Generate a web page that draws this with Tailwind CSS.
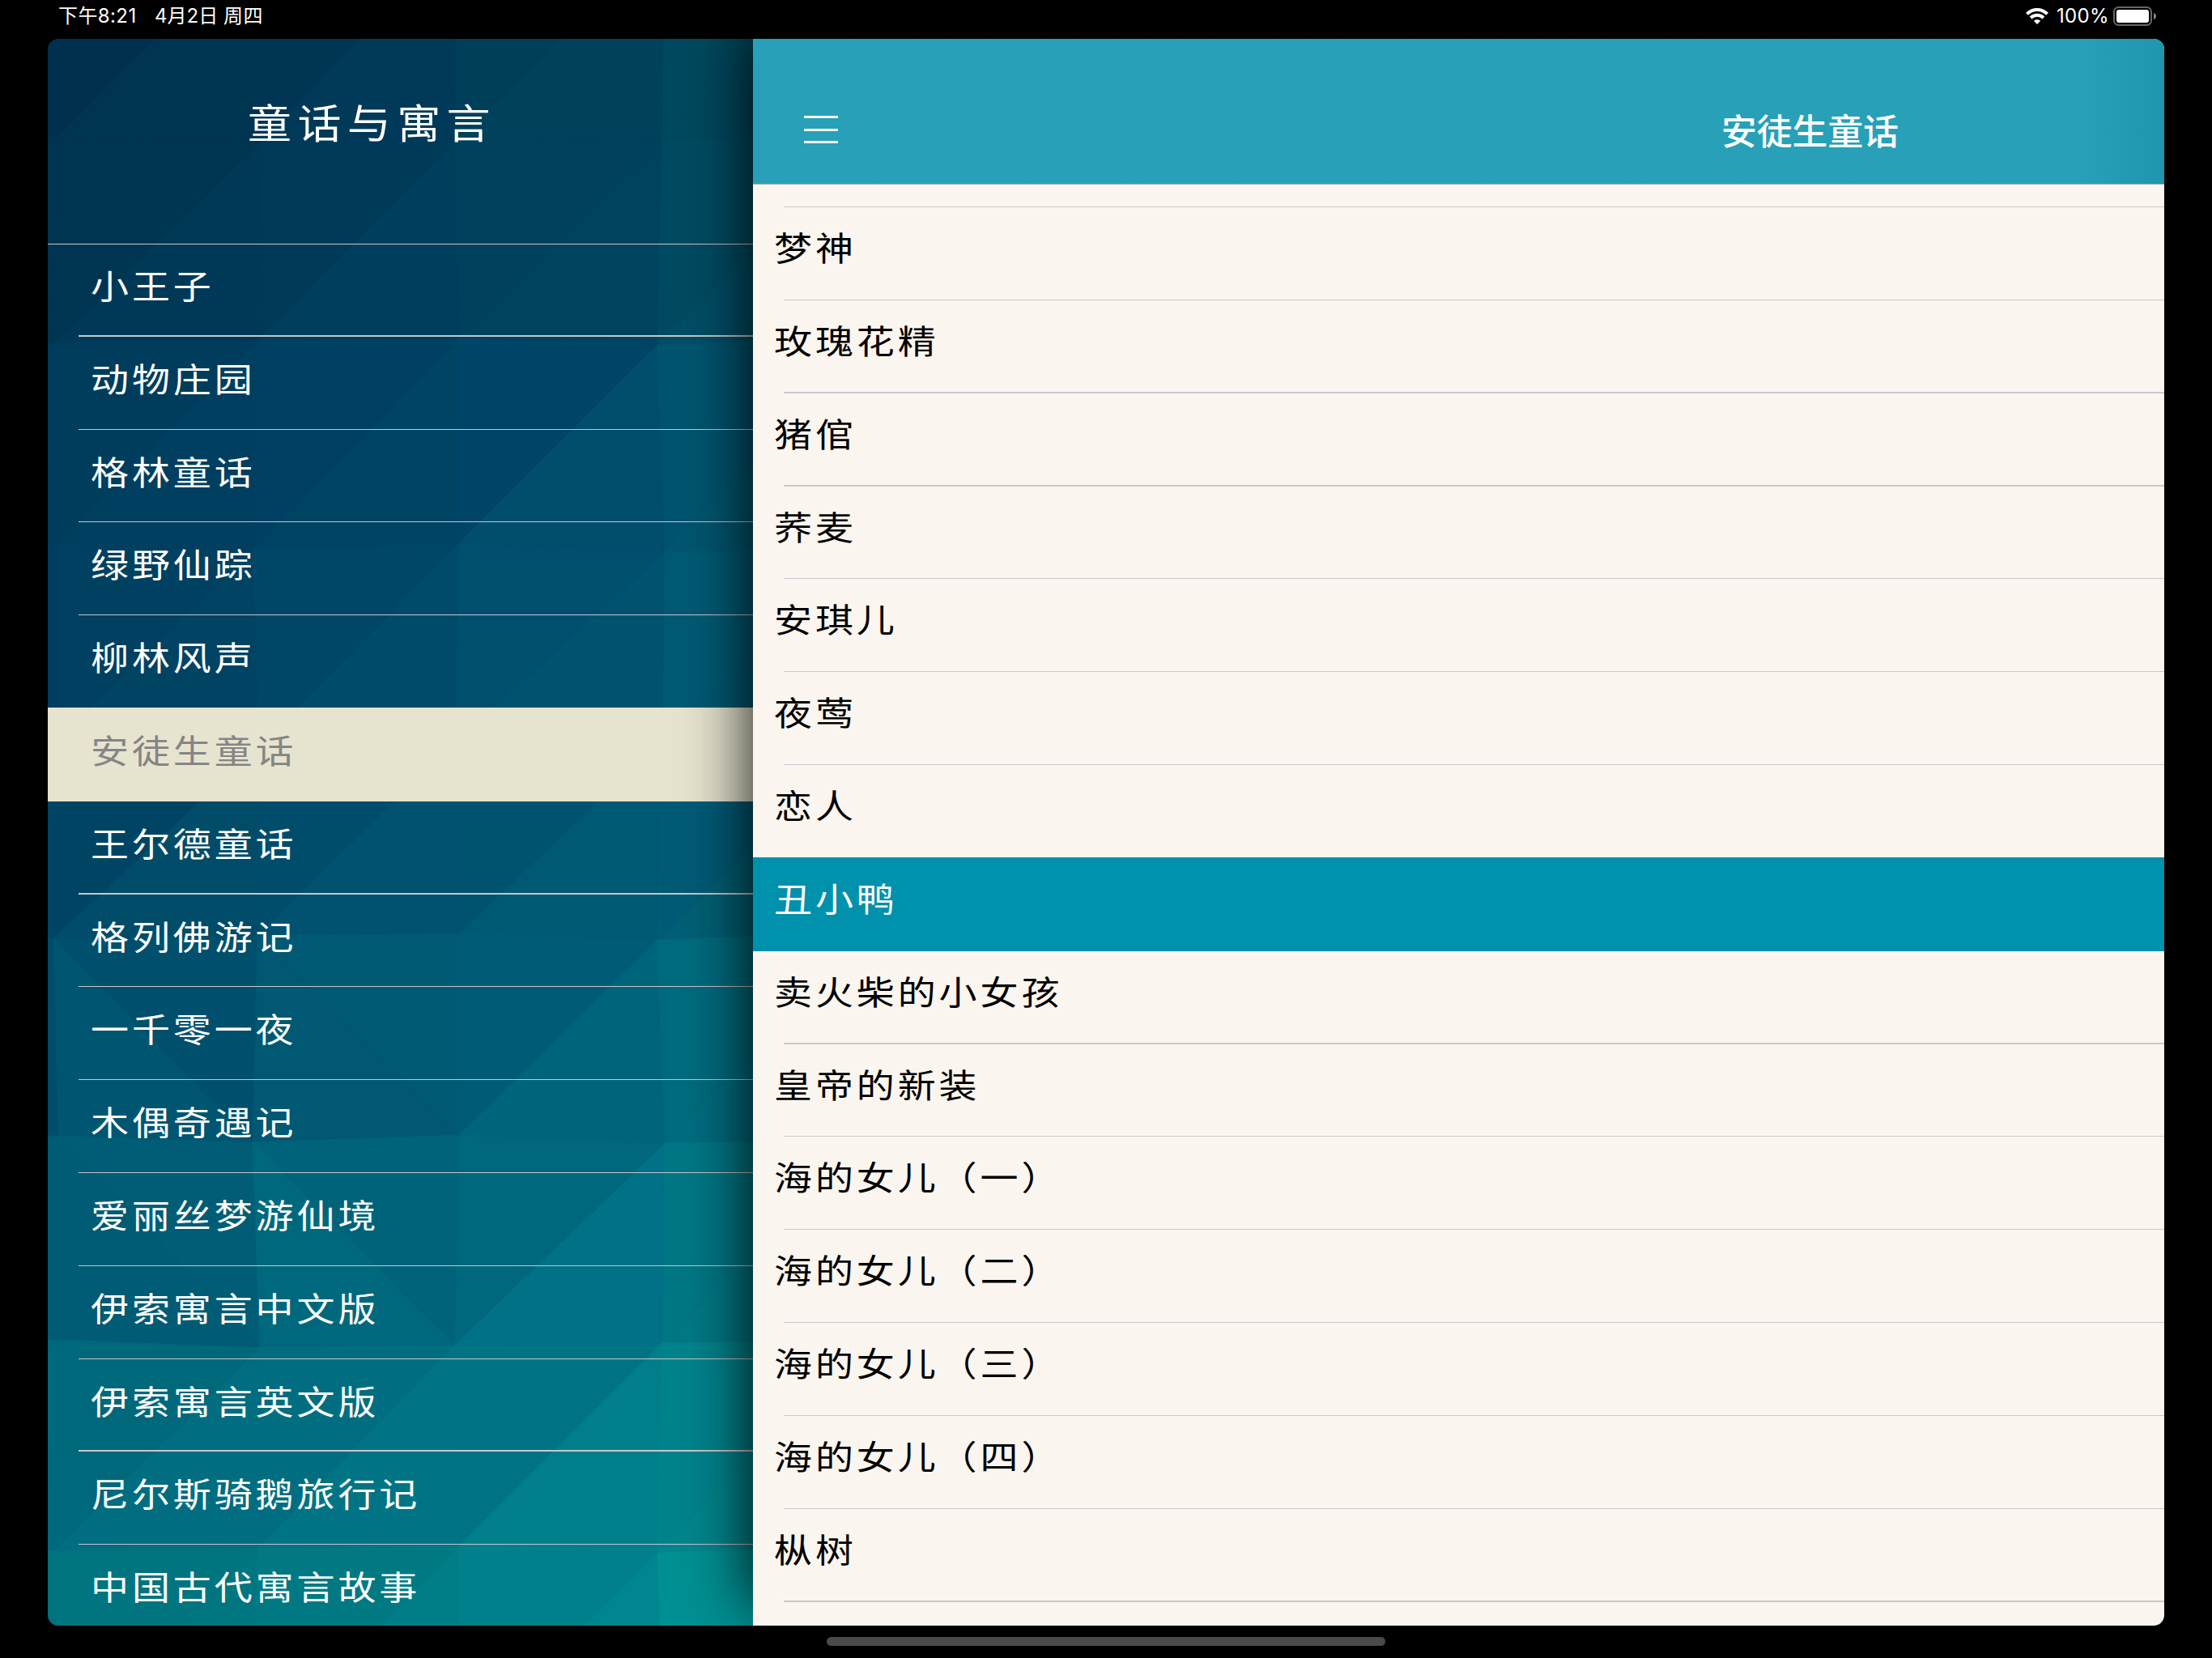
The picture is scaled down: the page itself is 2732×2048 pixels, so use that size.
<!DOCTYPE html>
<html lang="zh-CN">
<head>
  <meta charset="UTF-8">
  <meta name="viewport" content="width=device-width, initial-scale=1.0">
  <title>童话与寓言</title>
  <script src="https://cdn.jsdelivr.net/npm/@tailwindcss/browser@4"></script>
</head>
<body class="bg-black">
  <div class="flex h-[2048px] w-[2732px] flex-col overflow-hidden bg-black font-['Inter','Noto_Sans_CJK_SC',sans-serif] text-white">
    <!-- status bar -->
    <header class="flex h-12 shrink-0 items-start justify-between pl-[72px] pr-[69px] text-[24px] leading-10">
      <div class="flex whitespace-nowrap">
        <span class="w-[119px] tracking-[0.400px]">下午8:21</span>
        <span class="w-[85px]">4月2日</span>
        <span class="tracking-[0.600px]">周四</span>
      </div>
      <div class="flex h-10 items-center">
        <svg class="h-5 w-7" viewBox="0 0 28 20" fill="none" stroke="#fff" stroke-width="4">
          <path d="M1.4 7.2C8.6.2 19.4.2 26.6 7.2"/>
          <path d="M6.1 12c4.6-4.3 11.2-4.3 15.8 0"/>
          <path d="M14 20l-4.2-4.3c2.4-2.1 6-2.1 8.4 0z" fill="#fff" stroke="none"/>
        </svg>
        <span class="ml-[10px] w-[70px] tracking-[0.300px]">100%</span>
        <svg class="h-6 w-[53px]" viewBox="0 0 53 24">
          <rect x="1" y="1" width="46" height="22" rx="5.5" fill="none" stroke="#666" stroke-width="2"/>
          <rect x="4" y="4" width="40" height="16" rx="3" fill="#fff"/>
          <path d="M50 8c4 1.5 4 6.500 0 8z" fill="#888"/>
        </svg>
      </div>
    </header>

    <main class="mx-[59px] flex h-[1960px] shrink-0 overflow-hidden rounded-[13px]">
      <!-- book list -->
      <aside class="relative h-full w-[871px] shrink-0">
        <svg id="facets" class="absolute inset-0 h-full w-full" viewBox="59 48 871 1960"></svg>
        <div class="relative flex h-[254px] items-start border-b border-[#c8c7cc] pl-[247px] pt-[70px]">
          <h1 class="scale-y-92 whitespace-nowrap text-[54px] leading-[72px] tracking-[7.400px]">童话与寓言</h1>
        </div>
        <ul id="books" class="relative -mt-px"></ul>
      </aside>

      <!-- chapter list -->
      <section class="relative h-full w-[1743px] bg-[#faf5ee] text-black shadow-[0_-24px_76px_rgba(0,0,0,0.95)]">
        <div class="flex h-[180px] items-start justify-between border-b border-[#9db0b0] bg-linear-to-r from-[#27a0b8] from-94% to-[#1f96ae] pl-[63px] pr-[328px] text-white">
          <div class="flex flex-col gap-[12.500px] pt-[95px]">
            <span class="h-[3px] w-[42px] bg-white"></span>
            <span class="h-[3px] w-[42px] bg-white"></span>
            <span class="h-[3px] w-[42px] bg-white"></span>
          </div>
          <h2 class="pt-[86px] text-[43.800px] font-medium leading-[60px]">安徒生童话</h2>
        </div>
        <div class="ml-[38px] mt-[27px] h-px bg-[#c8c7cc]"></div>
        <ul id="chapters"></ul>
      </section>
    </main>

    <div class="mx-auto mt-[14px] h-[11px] w-[690px] rounded-full bg-[#4a4a4a]"></div>
  </div>

  <script>
const books = ['小王子', '动物庄园', '格林童话', '绿野仙踪', '柳林风声', '安徒生童话', '王尔德童话', '格列佛游记',
  '一千零一夜', '木偶奇遇记', '爱丽丝梦游仙境', '伊索寓言中文版', '伊索寓言英文版', '尼尔斯骑鹅旅行记', '中国古代寓言故事'];
const chapters = ['梦神', '玫瑰花精', '猪倌', '荞麦', '安琪儿', '夜莺', '恋人', '丑小鸭', '卖火柴的小女孩', '皇帝的新装',
  '海的女儿（一）', '海的女儿（二）', '海的女儿（三）', '海的女儿（四）', '枞树'];

// rows whose separator lands on two pixels
const thickBooks = [0, 6, 12];
const thickChapters = [1, 2, 8, 14];

document.getElementById('books').innerHTML = books.map((b, i) => {
  const line = i === 4 || i === 5 ? '' : thickBooks.includes(i)
    ? '<div class="ml-[38px] h-[2px] bg-[#c8c7cc]"></div>'
    : '<div class="ml-[38px] h-px bg-[#c8c7cc]"></div>';
  const row = b === '安徒生童话'
    ? 'flex h-[114.800px] flex-col justify-between bg-[#e6e4cf] text-[#858585] shadow-[0_-1px_0_#e6e4cf]'
    : 'flex h-[114.800px] flex-col justify-between text-white';
  return `<li class="${row}"><span class="scale-y-88 pl-[53px] pt-[22px] text-[47px] leading-[64px] tracking-[3.900px]">${b}</span>${line}</li>`;
}).join('');

document.getElementById('chapters').innerHTML = chapters.map((c, i) => {
  const line = i === 6 || i === 7 ? '' : thickChapters.includes(i)
    ? '<div class="ml-[38px] h-[2px] bg-[#c8c7cc]"></div>'
    : '<div class="ml-[38px] h-px bg-[#c8c7cc]"></div>';
  const row = c === '丑小鸭'
    ? 'flex h-[114.850px] flex-col justify-between bg-[#0091ac] text-white shadow-[0_-1px_0_#0091ac]'
    : 'flex h-[114.850px] flex-col justify-between text-black';
  return `<li class="${row}"><span class="scale-y-88 pl-[26px] pt-[20px] text-[47px] leading-[64px] tracking-[3.900px]">${c}</span>${line}</li>`;
}).join('');

// low-poly background: every cell is split in two triangles, [upper, lower] colour
const xs = [-180, 70, 318, 565, 818, 1070];
const ys = [-80, 172, 421, 675, 915, 1156, 1406, 1659, 1913, 2165];
const cells = [
  [['#002e4c', '#00304f'], ['#00304f', '#003552'], ['#003654', '#003a58'], ['#003f5a', '#00415b'], ['#00495f', '#00495f']],
  [['#003451', '#003451'], ['#003552', '#003958'], ['#003a59', '#003e5d'], ['#00415d', '#00435f'], ['#004b62', '#004e66']],
  [['#003a58', '#003b5a'], ['#003d5c', '#003f60'], ['#004062', '#004464'], ['#004567', '#004d6c'], ['#00546f', '#00566f']],
  [['#003e5f', '#003e5f'], ['#004060', '#004363'], ['#004767', '#004a6a'], ['#004f6e', '#00526f'], ['#005a74', '#005973']],
  [['#004363', '#004565'], ['#004464', '#004c69'], ['#004d6b', '#005270'], ['#00536f', '#005973'], ['#005b76', '#006075']],
  [['#004c69', '#004c69'], ['#00506d', '#005570', 1], ['#005a74', '#005872', 1], ['#005c76', '#00647b'], ['#006b7e', '#006c7f']],
  [['#005a73', '#005c74'], ['#005d75', '#005b74', 1], ['#00637a', '#00687d', 1], ['#00677c', '#007186'], ['#007785', '#007985']],
  [['#006879', '#00697b'], ['#00687b', '#006d80'], ['#006e80', '#007485'], ['#007385', '#007f8b'], ['#00838c', '#00868d']],
  [['#00727e', '#00727e'], ['#00747f', '#007681'], ['#007983', '#007e87'], ['#00808a', '#00868e'], ['#009093', '#009293']]
];
// small shifts so that the grid points do not line up perfectly
const jitter = [[0, 0], [2, -3], [-6, 5], [2, -4], [3, 6], [-4, 3]];
const pt = (r, c) => {
  const j = jitter[(r * 2 + c) % 6];
  return `${xs[c] + j[0]},${ys[r] + j[1]}`;
};
let shapes = '';
cells.forEach((line, r) => line.forEach(([a, b, flip], c) => {
  const tl = pt(r, c), tr = pt(r, c + 1), bl = pt(r + 1, c), br = pt(r + 1, c + 1);
  const first = flip ? `${tl} ${tr} ${br}` : `${tl} ${tr} ${bl}`;
  const second = flip ? `${tl} ${bl} ${br}` : `${tr} ${br} ${bl}`;
  shapes += `<polygon points="${first}" fill="${a}" stroke="${a}"/><polygon points="${second}" fill="${b}" stroke="${b}"/>`;
}));
document.getElementById('facets').innerHTML = shapes;
  </script>
</body>
</html>
